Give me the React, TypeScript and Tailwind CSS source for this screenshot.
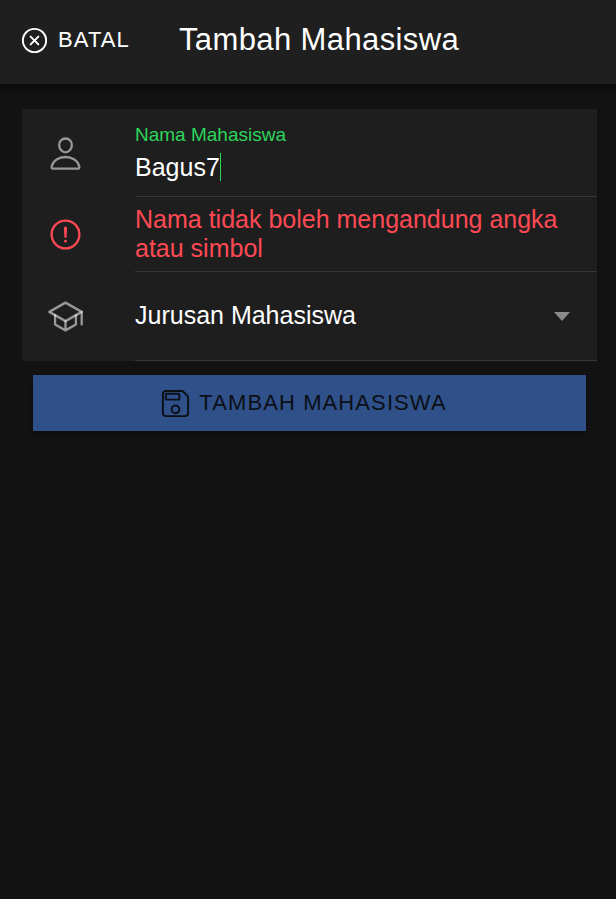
import { useState } from "react";
import type { ReactNode } from "react";
import {
  IoAlertCircleOutline,
  IoCloseCircleOutline,
  IoPersonOutline,
  IoSaveOutline,
  IoSchoolOutline,
} from "react-icons/io5";

function Item({ icon, children }: { icon: ReactNode; children: ReactNode }) {
  return (
    <div className="flex items-stretch pl-[25px]">
      <span className="flex w-[88px] shrink-0 items-center">{icon}</span>
      <div className="min-w-0 flex-1 border-b border-[#363636]">{children}</div>
    </div>
  );
}

export default function App() {
  const [name, setName] = useState("Bagus7");

  return (
    <div className="min-h-screen bg-[#121212] font-['Liberation_Sans',Arial,sans-serif] text-white">
      <header className="flex h-[84px] items-center bg-[#1f1f1f] px-[19px] pb-1 shadow-[0_3px_8px_rgba(0,0,0,0.5)]">
        <button
          type="button"
          className="flex items-center gap-2 text-[22px] leading-7 tracking-[0.05em]"
        >
          <IoCloseCircleOutline className="size-[31px]" aria-hidden="true" />
          BATAL
        </button>
        <h1 className="ml-[49px] text-[31px] leading-9 tracking-[0.0125em]">Tambah Mahasiswa</h1>
      </header>

      <main className="pt-[25px] pr-[19px] pl-[22px]">
        <form onSubmit={(event) => event.preventDefault()}>
          <div className="bg-[#1e1e1e]">
            <Item icon={<IoPersonOutline className="size-[37px] text-white/54" aria-hidden="true" />}>
              <div className="flex h-[87px] flex-col pt-3.5">
                <label htmlFor="nama" className="text-[19px] leading-6 text-[#2dd55b]">
                  Nama Mahasiswa
                </label>
                <div className="flex items-center pt-1.5">
                  <input
                    id="nama"
                    type="text"
                    value={name}
                    onChange={(event) => setName(event.target.value)}
                    className="field-sizing-content bg-transparent text-[25px] leading-7 caret-transparent outline-none"
                  />
                  <span className="h-7 w-px bg-[#2dd55b]" aria-hidden="true" />
                </div>
              </div>
            </Item>

            <Item icon={<IoAlertCircleOutline className="size-[37px] text-[#ff4954]" aria-hidden="true" />}>
              <p role="alert" className="pt-2 pr-6 pb-2 text-[25px] leading-[29px] text-[#ff4954]">
                Nama tidak boleh mengandung angka atau simbol
              </p>
            </Item>

            <Item icon={<IoSchoolOutline className="size-[37px] text-white/54" aria-hidden="true" />}>
              <div className="grid h-[88px] items-center">
                <select
                  aria-label="Jurusan Mahasiswa"
                  className="col-start-1 row-start-1 h-full w-full appearance-none bg-transparent text-[25px] outline-none"
                >
                  <option>Jurusan Mahasiswa</option>
                </select>
                <svg
                  viewBox="0 0 16 9"
                  className="pointer-events-none col-start-1 row-start-1 mr-[27px] h-[9px] w-4 justify-self-end fill-[#8a8a8a]"
                  aria-hidden="true"
                >
                  <path d="M0 0h16L8 9z" />
                </svg>
              </div>
            </Item>
          </div>

          <div className="px-[11px] pt-3.5">
            <button
              type="submit"
              className="flex h-14 w-full items-center justify-center gap-2 bg-[#2f5088] pr-3 text-[22px] leading-7 tracking-[0.05em] text-[#0b0f16] shadow-[0_3px_4px_rgba(0,0,0,0.3)]"
            >
              <IoSaveOutline className="size-[31px]" aria-hidden="true" />
              TAMBAH MAHASISWA
            </button>
          </div>
        </form>
      </main>
    </div>
  );
}
